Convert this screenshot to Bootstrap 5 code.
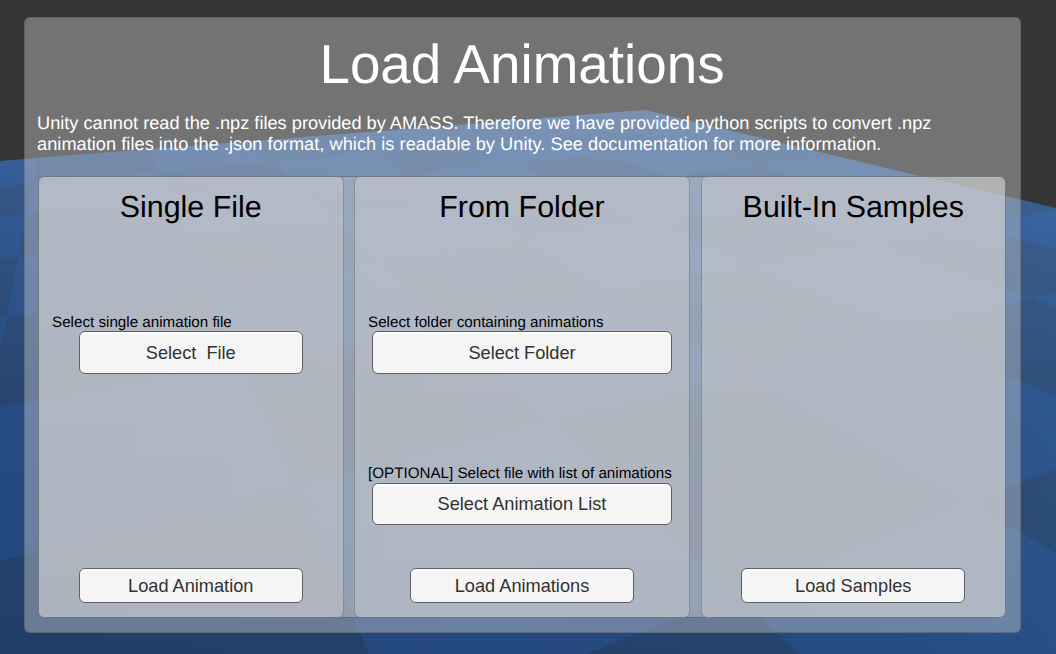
<!DOCTYPE html>
<html lang="en">
<head>
<meta charset="utf-8">
<meta name="viewport" content="width=device-width, initial-scale=1">
<title>Load Animations</title>
<link href="https://cdn.jsdelivr.net/npm/bootstrap@5.3.0/dist/css/bootstrap.min.css" rel="stylesheet">
<style>
  body { font-family: "Liberation Sans", Arial, sans-serif; background: #353535; height: 654px; overflow: hidden; text-rendering: geometricPrecision; padding: 17px 35.5px 21px 24px; }
  .scene { position: absolute; inset: 0; width: 1056px; height: 654px; z-index: -1; }
  .glass { background: rgba(219,219,219,.38); border-radius: 6px; box-shadow: inset 0 0 0 1px rgba(55,60,70,.3); }
  .window-panel { height: 616px; padding: 0 14.5px 14px 14px; }
  .window-title { font-size: 54.8px; line-height: 62px; padding-top: 16px; height: 96px; }
  .intro { font-size: 18.2px; line-height: 21px; height: 63px; margin-left: -1px; white-space: nowrap; }
  .intro span { letter-spacing: .035px; }
  .columns { height: 442px; background: rgba(217,217,217,.37); box-shadow: inset 0 0 0 1px rgba(45,50,60,.45); }
  .pane { background: rgba(211,209,211,.45); box-shadow: inset 0 0 0 1px rgba(45,50,60,.32); border-radius: 6px; padding-bottom: 15px; color: #000; }
  .side { width: 305.5px; }
  .middle { width: 336px; }
  .pane h2 { font-size: 30.4px; line-height: 36px; font-weight: 400; margin: 13px 0 88px; text-align: center; }
  .hint { font-size: 15.2px; line-height: 20px; height: 18px; padding-left: 14px; white-space: pre; }
  .btn-light { --bs-btn-bg: #f5f5f5; --bs-btn-color: #323232; --bs-btn-border-color: #5e6064; --bs-btn-border-radius: 6px; --bs-btn-font-size: 18.2px; --bs-btn-line-height: 1; --bs-btn-padding-y: 0; box-shadow: inset 0 2px 0 #fff; white-space: pre; margin: 0 auto; }
  .pick { height: 43px; padding-top: 1px; }
  .run { height: 35px; width: 224px; padding-top: 1px; }
  .w-pick-s { width: 224px; }
  .w-pick-m { width: 300px; }
  .second { margin-top: 90px; height: 19px; }
  .second + .pick { height: 42px; }
</style>
</head>
<body>
<svg class="scene" viewBox="0 0 1056 654" aria-hidden="true">
  <defs>
    <linearGradient id="light" gradientUnits="userSpaceOnUse" x1="0" y1="110" x2="0" y2="654">
      <stop offset="0" stop-color="#3f6aa6"/><stop offset=".2" stop-color="#365f98"/><stop offset=".5" stop-color="#2b528a"/><stop offset="1" stop-color="#254a80"/>
    </linearGradient>
    <linearGradient id="dark" gradientUnits="userSpaceOnUse" x1="0" y1="110" x2="0" y2="654">
      <stop offset="0" stop-color="#3e669d"/><stop offset=".18" stop-color="#385a89"/><stop offset=".5" stop-color="#2c4b75"/><stop offset="1" stop-color="#24426c"/>
    </linearGradient>
    <linearGradient id="side" x1="0" x2="1" y1="0" y2="0">
      <stop offset="0" stop-color="#001c50" stop-opacity=".1"/><stop offset=".45" stop-opacity="0"/><stop offset="1" stop-color="#5a9ad8" stop-opacity=".07"/>
    </linearGradient>
  </defs>
  <path fill="url(#light)" d="M0 161 645 110 1056 209V654H0Z"/>
  <path id="tiles" fill="url(#dark)"/>
  <path fill="url(#side)" d="M0 161 645 110 1056 209V654H0Z"/>
</svg>

<main class="glass window-panel d-flex flex-column">
  <h1 class="window-title text-center text-white fw-normal mb-0">Load Animations</h1>
  <p class="intro text-white mb-0">Unity cannot read the .npz files provided by AMASS. Therefore we have provided python scripts to convert .npz<br><span>animation files into the .json format, which is readable by Unity. See documentation for more information.</span></p>
  <div class="glass columns d-flex justify-content-between">
    <section class="pane side d-flex flex-column">
      <h2>Single File</h2>
      <div class="hint">Select single animation file</div>
      <button class="btn btn-light pick w-pick-s" type="button">Select  File</button>
      <button class="btn btn-light run mt-auto" type="button">Load Animation</button>
    </section>
    <section class="pane middle d-flex flex-column">
      <h2>From Folder</h2>
      <div class="hint">Select folder containing animations</div>
      <button class="btn btn-light pick w-pick-m" type="button">Select Folder</button>
      <div class="hint second">[OPTIONAL] Select file with list of animations</div>
      <button class="btn btn-light pick w-pick-m" type="button">Select Animation List</button>
      <button class="btn btn-light run mt-auto" type="button">Load Animations</button>
    </section>
    <section class="pane side d-flex flex-column">
      <h2>Built-In Samples</h2>
      <button class="btn btn-light run mt-auto" type="button">Load Samples</button>
    </section>
  </div>
</main>
<script src="https://cdn.jsdelivr.net/npm/bootstrap@5.3.0/dist/js/bootstrap.bundle.min.js"></script>
<script>
  // Checkered floor in two-point perspective: vanishing points (2300,-24) and (74,-24).
  const corner = (i, j) => {
    const a = -1697 + 454 * i, b = 10 + 205 * j;
    const s = 2226 / Math.max(b - a + 2226, 60);
    return (74 + (b - 74) * s).toFixed(1) + ' ' + (s * 324 - 24).toFixed(1);
  };
  let d = '';
  for (let i = 0; i < 10; i++)
    for (let j = -8; j < 7; j++)
      if ((i + j) % 2 === 0 && 10 + 205 * j + 1697 - 454 * (i + 1) + 2226 > 60)
        d += 'M' + [corner(i, j), corner(i + 1, j), corner(i + 1, j + 1), corner(i, j + 1)].join('L') + 'Z';
  document.getElementById('tiles').setAttribute('d', d);
</script>
</body>
</html>
